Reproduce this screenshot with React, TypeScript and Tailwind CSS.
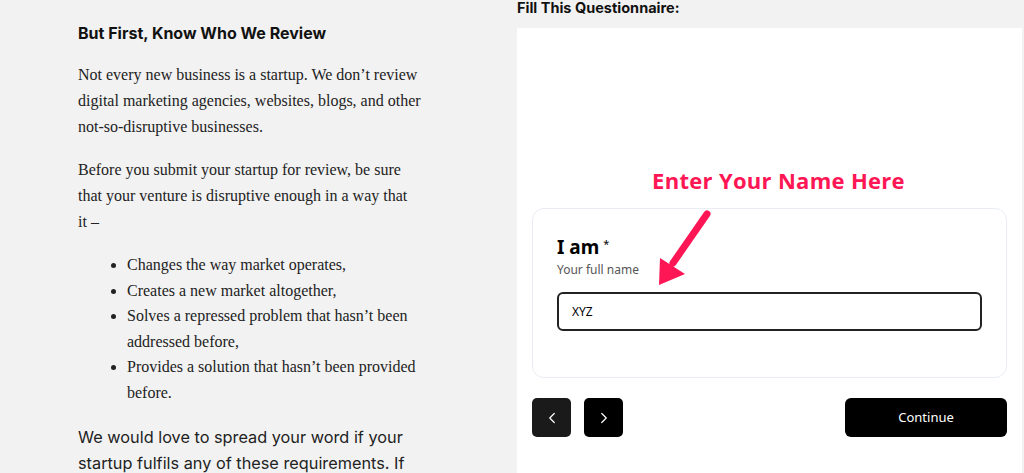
import React, { useState } from 'react';
import { ChevronLeft, ChevronRight } from 'lucide-react';

const requirements: string[] = [
    'Changes the way market operates,',
    'Creates a new market altogether,',
    'Solves a repressed problem that hasn\u2019t been addressed before,',
    'Provides a solution that hasn\u2019t been provided before.',
];

const ArticleColumn: React.FC = () => (
    <div className="w-[348px] shrink-0 pt-[21px] text-[#222]">
        <h3 className="font-['Inter',sans-serif] text-[16px] font-bold leading-[24px] text-[#111]">
            But First, Know Who We Review
        </h3>
        <p className="mt-[17px] font-['Liberation_Serif',serif] text-[16px] leading-[26px]">
            Not every new business is a startup. We don&rsquo;t review digital marketing agencies, websites, blogs, and other not-so-disruptive businesses.
        </p>
        <p className="mt-[17px] font-['Liberation_Serif',serif] text-[16px] leading-[26px]">
            Before you submit your startup for review, be sure that your venture is disruptive enough in a way that it&nbsp;&ndash;
        </p>
        <ul className="mt-[17px] list-disc pl-[49px] font-['Liberation_Serif',serif] text-[16px] leading-[25.6px]">
            {requirements.map(item => (
                <li key={item}>{item}</li>
            ))}
        </ul>
        <p className="mt-[18px] font-['Inter',sans-serif] text-[16.3px] leading-[26px] text-[#222]">
            We would love to spread your word if your startup fulfils any of these requirements. If
        </p>
    </div>
);

const PointerArrow: React.FC = () => (
    <svg className="absolute left-[122px] top-[-3px]" width="60" height="86" viewBox="0 0 60 86">
        <line x1="52" y1="8" x2="18" y2="57" stroke="#ff1654" strokeWidth="7" strokeLinecap="round" />
        <polygon points="4,79 5,52 30,68" fill="#ff1654" />
    </svg>
);

const Questionnaire: React.FC = () => {
    const [name, setName] = useState<string>('XYZ');

    return (
        <div className="w-[505px] shrink-0">
            <h4 className="-mt-[4px] h-[32px] font-['Inter',sans-serif] text-[14.5px] font-bold leading-[24px] text-[#111]">
                Fill This Questionnaire:
            </h4>
            <div className="h-[445px] bg-white px-[15px] pt-[139px]">
                <p className="pl-[18px] text-center font-['Open_Sans',sans-serif] text-[22px] font-bold leading-[26px] tracking-[0.3px] text-[#ff1654]">
                    Enter Your Name Here
                </p>
                <div className="relative mt-[15px] h-[170px] rounded-[12px] border border-[#e9edf3] px-[24px] pt-[25px]">
                    <PointerArrow />
                    <div className="flex items-start font-['Noto_Sans',sans-serif] text-[19px] font-bold leading-[26px] text-black">
                        I am<span className="ml-[4px] text-[11px] font-normal leading-[20px]">*</span>
                    </div>
                    <div className="mt-[2px] font-['Noto_Sans',sans-serif] text-[12px] leading-[16px] text-[#555]">
                        Your full name
                    </div>
                    <input
                        value={name}
                        onChange={e => setName(e.target.value)}
                        className="mt-[14px] h-[39px] w-full rounded-[6px] border-2 border-[#222] px-[13px] font-['Noto_Sans',sans-serif] text-[12px] text-black outline-none"
                    />
                </div>
                <div className="mt-[20px] flex items-center">
                    <button className="flex h-[39px] w-[39px] items-center justify-center rounded-[5px] bg-[#1a1a1a] text-white">
                        <ChevronLeft size={18} strokeWidth={1.6} />
                    </button>
                    <button className="ml-[13px] flex h-[39px] w-[39px] items-center justify-center rounded-[5px] bg-black text-white">
                        <ChevronRight size={18} strokeWidth={1.6} />
                    </button>
                    <button className="ml-auto h-[39px] w-[162px] rounded-[6px] bg-black font-['Noto_Sans',sans-serif] text-[13px] text-white">
                        Continue
                    </button>
                </div>
            </div>
        </div>
    );
};

const App: React.FC = () => {
    return (
        <div className="h-[473px] w-full overflow-hidden bg-[#f2f2f2]">
            <div className="flex pl-[78px]">
                <ArticleColumn />
                <div className="w-[91px] shrink-0" />
                <Questionnaire />
            </div>
        </div>
    );
};

export default App;
